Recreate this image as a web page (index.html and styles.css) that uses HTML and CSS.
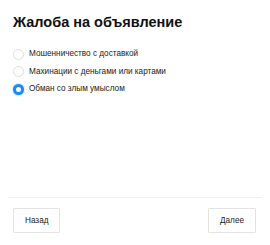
FILE: index.html
```html
<!DOCTYPE html>
<html>
<head>
<meta charset="utf-8">
<link rel="stylesheet" href="styles.css">
</head>
<body>
<div class="dialog">
  <h1 class="title">Жалоба на объявление</h1>
  <div class="options">
    <label class="option"><span class="radio"></span><span class="label">Мошенничество с доставкой</span></label>
    <label class="option"><span class="radio"></span><span class="label">Махинации с деньгами или картами</span></label>
    <label class="option"><span class="radio checked"></span><span class="label">Обман со злым умыслом</span></label>
  </div>
  <div class="spacer"></div>
  <div class="footer">
    <button class="btn">Назад</button>
    <button class="btn">Далее</button>
  </div>
</div>
</body>
</html>
```
FILE: styles.css
```css
html, body { margin: 0; padding: 0; background: #fff; }
body { font-family: "Liberation Sans", Arial, sans-serif; color: #111; }
.dialog { width: 270px; height: 245px; display: flex; flex-direction: column; box-sizing: border-box; }
.title { margin: 0; padding: 12px 0 0 13px; font-size: 14.5px; font-weight: bold; line-height: 20px; color: #111; }
.options { display: flex; flex-direction: column; gap: 5.5px; padding: 16px 0 0 13px; }
.option { display: flex; align-items: center; gap: 5px; font-size: 8.2px; line-height: 12px; color: #222; }
.radio { width: 11px; height: 11px; border: 1px solid #ddd; border-radius: 50%; box-sizing: border-box; background: #fff; }
.radio.checked { border: 3.5px solid #1a8cf5; box-shadow: 0 0 2px #6bb5ff; }
.spacer { flex: 1; }
.footer { display: flex; justify-content: space-between; border-top: 1px solid #f0f0f0; margin: 0 8px; padding: 10px 6px 12px 5px; }
.btn { font-family: "Liberation Sans", Arial, sans-serif; font-size: 8.2px; color: #222; background: #fff; border: 1px solid #e3e3e3; border-radius: 1px; height: 25px; padding: 0 11px; }
```
